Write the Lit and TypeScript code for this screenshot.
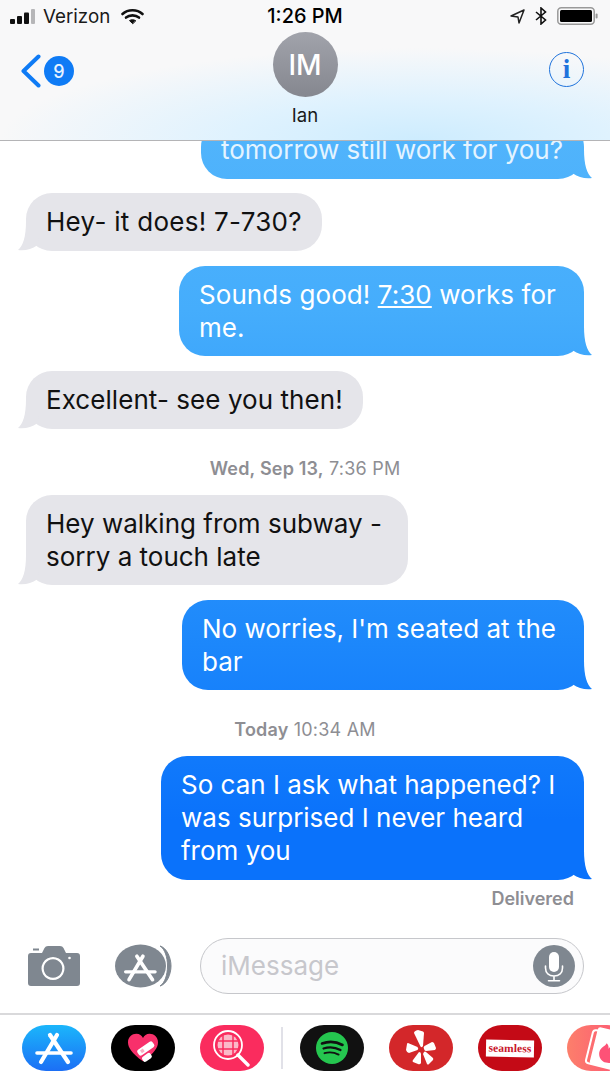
import { LitElement, html, css, svg } from "lit";
import { customElement } from "lit/decorators.js";

type Item =
  | { kind: "in" | "out"; text: unknown; cls?: string }
  | { kind: "time"; bold: string; rest: string };

const items: Item[] = [
  { kind: "out", text: "tomorrow still work for you?", cls: "cut" },
  { kind: "in", text: "Hey- it does! 7-730?", cls: "s1" },
  { kind: "out", text: html`Sounds good! <u>7:30</u> works for me.`, cls: "two w405 s2" },
  { kind: "in", text: "Excellent- see you then!", cls: "s3" },
  { kind: "time", bold: "Wed, Sep 13,", rest: " 7:36 PM" },
  { kind: "in", text: "Hey walking from subway - sorry a touch late", cls: "two w382" },
  { kind: "out", text: "No worries, I'm seated at the bar", cls: "two w402" },
  { kind: "time", bold: "Today", rest: " 10:34 AM" },
  { kind: "out", text: "So can I ask what happened? I was surprised I never heard from you", cls: "w423" },
];

const A = (c: string) => svg`<g stroke=${c} stroke-width="4.2" stroke-linecap="round" fill="none">
  <path d="M35 10 L19 37"/><path d="M28 10 L46 37"/><path d="M15 28 H49" stroke-width="3.6"/></g>`;

@customElement("app-root")
export class AppRoot extends LitElement {
  static styles = css`
    :host { display: block; width: 610px; height: 1085px; background: #fff; overflow: hidden; font-family: Inter, "Liberation Sans", sans-serif; color: #000; }
    .page { height: 1085px; display: flex; flex-direction: column; }
    .head { flex: none; height: 141px; box-sizing: border-box; border-bottom: 1px solid #b4b4b6; background: radial-gradient(ellipse 420px 92px at 420px 140px, #cdecfe 0%, #dff2fe 45%, rgba(248,248,249,0) 100%), #f8f8f9; display: flex; flex-direction: column; }
    .status { height: 32px; padding: 0 12px; display: grid; grid-template-columns: 1fr auto 1fr; align-items: center; font-size: 18.8px; }
    .st-left { display: flex; align-items: center; gap: 8px; margin-left: -2px; }
    .st-right { display: flex; align-items: center; justify-content: flex-end; gap: 10px; }
    .carrier { margin-right: 3px; color: #1a1a1a; }
    .clock { font-weight: 500; font-size: 19.9px; }
    .nav { display: grid; grid-template-columns: 1fr auto 1fr; align-items: start; padding: 0 21px; }
    .back { display: flex; align-items: center; gap: 3px; margin-top: 22px; }
    .badge { width: 30px; height: 30px; border-radius: 50%; background: #0f7bf5; color: #e8f3ff; font-size: 18px; font-weight: 500; display: flex; align-items: center; justify-content: center; }
    .who { display: flex; flex-direction: column; align-items: center; }
    .avatar { width: 65px; height: 65px; border-radius: 50%; background: linear-gradient(#a1a3ab, #85878f); color: #fff; font-size: 28px; font-weight: 500; display: flex; align-items: center; justify-content: center; }
    .name { font-size: 18.6px; line-height: 22px; margin-top: 7px; color: #1a1a1a; }
    .info-wrap { display: flex; justify-content: flex-end; margin: 20px 5px 0 0; }
    .info { width: 35px; height: 35px; box-sizing: border-box; border: 1.6px solid #1f73dc; border-radius: 50%; color: #1f73dc; font: bold 27px/33px "Liberation Serif", serif; text-align: center; }

    .chat { flex: 1; min-height: 0; overflow: hidden; display: flex; flex-direction: column; gap: 15px; padding: 0 26px; }
    .bubble { position: relative; flex: none; box-sizing: border-box; border-radius: 26px; padding: 12px 20px 13px; font-size: 26px; line-height: 33px; max-width: 405px; }
    .two { padding-bottom: 12px; }
    .in { align-self: flex-start; background: #e5e5ea; color: #111; }
    .blue { background: linear-gradient(#5ab9fb 0, #45adfc 310px, #1c87fb 645px, #0a72fb 820px, #0a72fb 1085px) fixed; }
    .out { align-self: flex-end; color: #fff; }
    .cut { margin-top: -20px; margin-bottom: -1px; width: 383px; color: #e4f4ff; white-space: nowrap; }
    .s1 { letter-spacing: 0.28px; }
    .s2 { letter-spacing: 0.07px; }
    .s3 { letter-spacing: 0.06px; }
    .w405 { width: 405px; }
    .w382 { width: 382px; }
    .w402 { width: 402px; }
    .w423 { width: 423px; max-width: 423px; }
    .tail { position: absolute; bottom: 0; width: 28px; height: 30px; }
    .tr { right: -8px; clip-path: path("M20 0 C20 16 23 25 28 29 C21 30 14 28 9 24.500 L6 10 Z"); }
    .tl { left: -8px; background: #e5e5ea; clip-path: path("M8 0 C8 16 5 25 0 29 C7 30 14 28 19 24.500 L22 10 Z"); }
    .time { flex: none; text-align: center; font-size: 18px; letter-spacing: 0.2px; line-height: 20px; color: #8e8e93; padding: 15px 0 1px; }
    .time b { font-weight: 600; }
    .delivered { flex: none; text-align: right; font-size: 18px; font-weight: 600; line-height: 20px; color: #8e8e93; margin: -6px 10px 0 0; }

    .composer { flex: none; height: 88px; display: flex; align-items: center; padding: 0 26px 7px 28px; box-sizing: border-box; }
    .cam { flex: none; display: block; }
    .appbtn { flex: none; display: block; margin-left: 35px; }
    .field { flex: 1; height: 56px; margin-left: 28px; box-sizing: border-box; border: 1.6px solid #c6c7cb; border-radius: 28px; background: #fbfbfc; display: flex; align-items: center; justify-content: space-between; padding: 0 8px 0 20px; }
    .ph { font-size: 26px; color: #c7c7cc; }
    .mic { display: block; }

    .tray { flex: none; height: 72px; box-sizing: border-box; border-top: 2px solid #d9d9db; display: flex; align-items: flex-start; gap: 25px; padding: 10px 0 0 22px; overflow: hidden; }
    .ico { flex: none; width: 64px; height: 46px; border-radius: 24px / 23px; overflow: hidden; position: relative; display: flex; align-items: center; justify-content: center; }
    .ico svg { display: block; }
    .store { background: linear-gradient(#1bb6fb, #1c6ff5); }
    .black { background: #000; }
    .pink { background: #fa2c5e; }
    .dark { background: #111; }
    .yelp { background: #d3272a; }
    .seam { background: #c40a16; }
    .tind { background: linear-gradient(90deg, #fc7f6b, #fd5277); }
    .sep { flex: none; width: 2px; height: 42px; margin: 2px -8px 0; background: #e1e1e8; }
    .sl { background: #fff; color: #c9162b; font: bold 11.5px/17px "Liberation Serif", serif; width: 48px; text-align: center; transform: rotate(1deg); letter-spacing: 0.1px; }
  `;

  private status() {
    return html`<div class="status">
      <div class="st-left">
        <svg width="25" height="15" viewBox="0 0 25 15"><rect x="0" y="10" width="5" height="5" rx="1" fill="#111"/><rect x="7" y="7" width="5" height="8" rx="1" fill="#111"/><rect x="14" y="3.500" width="5" height="11.500" rx="1" fill="#111"/><rect x="21" y="0" width="4" height="15" rx="1" fill="#b6b6b8"/></svg>
        <span class="carrier">Verizon</span>
        <svg width="23" height="17" viewBox="0 0 23 17" fill="none" stroke="#111" stroke-linecap="round"><path d="M1.500 6 C7 1 16 1 21.500 6" stroke-width="2.600"/><path d="M5 9.600 C8.500 6.600 14.500 6.600 18 9.600" stroke-width="2.600"/><path d="M11.500 15.500 L8.500 12.600 C10.200 11.400 12.800 11.400 14.500 12.600 Z" fill="#111" stroke-width="1"/></svg>
      </div>
      <div class="clock">1:26 PM</div>
      <div class="st-right">
        <svg width="15" height="15" viewBox="0 0 15 15" fill="none" stroke="#222" stroke-width="1.500" stroke-linejoin="round"><path d="M14 1 L1 7 L8 8 L9 14 Z"/></svg>
        <svg width="12" height="18" viewBox="0 0 12 18" fill="none" stroke="#111" stroke-width="1.600"><path d="M1 5 L10.500 13 L6 17 V1 L10.500 5 L1 13"/></svg>
        <svg width="41" height="18" viewBox="0 0 41 18"><rect x="0.800" y="0.800" width="36.400" height="16.400" rx="3.500" fill="none" stroke="#999" stroke-width="1.500"/><rect x="3" y="3" width="32" height="12" rx="1.500" fill="#000"/><rect x="38.600" y="6.500" width="2" height="5" rx="1" fill="#999"/></svg>
      </div>
    </div>`;
  }

  private nav() {
    return html`<div class="nav">
      <div class="back">
        <svg width="20" height="34" viewBox="0 0 20 34" fill="none" stroke="#0f7bf5" stroke-width="4" stroke-linecap="round" stroke-linejoin="round"><path d="M17.500 2.500 L2.500 17 L17.500 31.500"/></svg>
        <div class="badge">9</div>
      </div>
      <div class="who"><div class="avatar">IM</div><div class="name">Ian</div></div>
      <div class="info-wrap"><div class="info">i</div></div>
    </div>`;
  }

  private composer() {
    return html`<div class="composer">
      <svg class="cam" width="52" height="40" viewBox="0 0 52 40"><path fill="#7f8790" fill-rule="evenodd" d="M3 7 H14 L16.500 2 Q17.500 0 20 0 H32 Q34.500 0 35.500 2 L38 7 H49 Q52 7 52 10 V37 Q52 40 49 40 H3 Q0 40 0 37 V10 Q0 7 3 7 Z M25 11 A11.500 11.500 0 1 0 25.010 11 Z M25 13.200 A9.300 9.300 0 1 1 24.990 13.200 Z"/><rect x="5" y="2.500" width="6" height="2" fill="#7f8790"/><circle cx="41.500" cy="12" r="1.300" fill="#fff"/></svg>
      <svg class="appbtn" width="57" height="44" viewBox="0 0 57 44"><path d="M45 2 C55 8 55 36 45 42 C52 40 56 30 56 22 C56 14 52 4 45 2 Z" fill="#7f8790" stroke="#7f8790"/><ellipse cx="25.500" cy="22" rx="25.500" ry="21.500" fill="#7f8790"/><g transform="translate(-2.500 3.500) scale(.87)">${A("#fff")}</g></svg>
      <div class="field">
        <span class="ph">iMessage</span>
        <svg class="mic" width="42" height="42" viewBox="0 0 42 42"><circle cx="21" cy="21" r="21" fill="#7f8790"/><rect x="16" y="7" width="10" height="20" rx="5" fill="#fff"/><path d="M12.500 21 V23 C12.500 28 16 31 21 31 C26 31 29.500 28 29.500 23 V21 M21 31 V35.500 M15.500 35.800 H26.500" fill="none" stroke="#fff" stroke-width="1.600" stroke-linecap="round"/></svg>
      </div>
    </div>`;
  }

  private tray() {
    return html`<div class="tray">
      <div class="ico store"><svg width="64" height="46" viewBox="0 0 64 46">${A("#fff")}</svg></div>
      <div class="ico black"><svg width="34" height="30" viewBox="0 0 40 36"><path fill="#f8306b" d="M20 34 C6 24 2 17 2 11 C2 5 7 1 12 1 C16 1 18.500 3 20 6 C21.500 3 24 1 28 1 C33 1 38 5 38 11 C38 17 34 24 20 34 Z"/><g transform="rotate(-35 22 22)"><rect x="14" y="16" width="22" height="8" rx="2.500" fill="#fff"/><rect x="18" y="18" width="4" height="4" fill="#f8b0c4"/><rect x="14" y="26" width="12" height="7" rx="2.500" fill="#fff"/></g></svg></div>
      <div class="ico pink"><svg width="40" height="38" viewBox="0 0 40 38" fill="none" stroke="#fff"><circle cx="16" cy="16" r="14" stroke-width="1.800"/><circle cx="16" cy="16" r="10.500" fill="#fbb9c8" stroke="none"/><path d="M6 12 H26 M6 20 H26 M11 6 V26 M21 6 V26" stroke="#fa2c5e" stroke-width="1.500"/><path d="M26 26 L36 36" stroke-width="3.400" stroke-linecap="round"/></svg></div>
      <div class="sep"></div>
      <div class="ico dark"><svg width="32" height="32" viewBox="0 0 32 32" fill="none" stroke="#111" stroke-linecap="round"><circle cx="16" cy="16" r="16" fill="#25c64f" stroke="none"/><path d="M6 11.500 C13 9 20 9.500 26.500 13" stroke-width="2.600"/><path d="M7.500 16.500 C13 14.600 19 15 24.500 18" stroke-width="2.200"/><path d="M8.500 21.200 C13 19.800 18 20.200 22.600 22.600" stroke-width="1.900"/></svg></div>
      <div class="ico yelp"><svg width="30" height="36" viewBox="0 0 30 36" fill="#fff"><path d="M12 0 L17 1.500 Q18 2 18 3 L17 16 Q16 18 14.500 16.500 L8 3 Q8 1 12 0 Z"/><path d="M1 14 Q1 13 2 13 L11.500 17 Q13 19 11.500 20 L3 23 Q1 23 0 20 Z"/><path d="M13 22 Q15 22 15 24 L15 33 Q14 35 12 34 L7 32 Q6 31 7 30 Z"/><path d="M18 22 Q19 21 20 22 L27 28 Q27.500 29 27 30 L23 34 Q22 35 21 34 L17 24 Z"/><path d="M18 19 Q17 17 18.500 16 L26 12 Q27 12 28 13 L30 18 Q30 19 29 20 L20 21 Q18.500 21 18 19 Z"/></svg></div>
      <div class="ico seam"><div class="sl">seamless</div></div>
      <div class="ico tind"><svg width="64" height="46" viewBox="0 0 64 46"><g transform="rotate(14 30 24)"><rect x="22" y="6" width="30" height="34" rx="3" fill="none" stroke="#fff" stroke-width="2"/><rect x="26" y="2" width="34" height="38" rx="3" fill="#fff"/><path d="M44 10 C46 16 52 18 52 26 C52 32 47 35 42 35 C37 35 33 31 33 26 C33 21 37 20 38 16 C40 17 41 19 41 21 C43 18 44 14 44 10 Z" fill="#fd5277"/></g></svg></div>
    </div>`;
  }

  render() {
    return html`<div class="page">
      <header class="head">${this.status()}${this.nav()}</header>
      <section class="chat">
        ${items.map((m) =>
          m.kind === "time"
            ? html`<div class="time"><b>${m.bold}</b>${m.rest}</div>`
            : html`<div class="bubble ${m.kind} ${m.kind === "out" ? "blue" : ""} ${m.cls ?? ""}">${m.text}${m.kind === "out" ? html`<div class="tail tr blue"></div>` : html`<div class="tail tl"></div>`}</div>`
        )}
        <div class="delivered">Delivered</div>
      </section>
      ${this.composer()}
      ${this.tray()}
    </div>`;
  }
}
